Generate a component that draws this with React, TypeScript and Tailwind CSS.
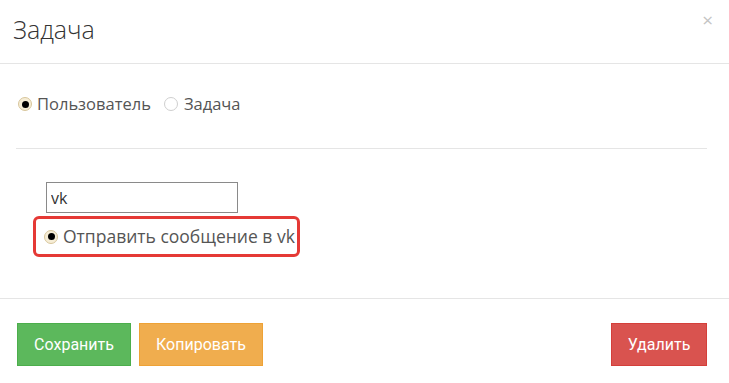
import * as React from "react";

function Radio({ checked }: { checked?: boolean }) {
  if (checked) {
    return (
      <span className="inline-flex h-[14px] w-[14px] shrink-0 items-center justify-center rounded-full border border-[#d8c69c] bg-[#f6edd6]">
        <span className="h-[7px] w-[7px] rounded-full bg-black" />
      </span>
    );
  }
  return <span className="inline-block h-[14px] w-[14px] shrink-0 rounded-full border border-[#cfcfcf] bg-white" />;
}

export default function App() {
  return (
    <div className="h-[383px] w-[729px] bg-white font-['Open_Sans',sans-serif] text-[#555]">
      <div className="relative flex h-[64px] items-center border-b border-[#e5e5e5] px-[13px] pb-[4px]">
        <h4 className="text-[25px] font-light text-[#333]">Задача</h4>
        <span className="absolute right-[16px] top-[11px] text-[19px] leading-none text-[#c4c4c4]">×</span>
      </div>

      <div className="pl-[16px] pr-[22px]">
        <div className="flex h-[85px] items-center border-b border-[#e5e5e5] pb-[4px] text-[16.5px]">
          <label className="ml-[2px] flex items-center gap-[5px]">
            <Radio checked />
            <span>Пользователь</span>
          </label>
          <label className="ml-[13px] flex items-center gap-[6px]">
            <Radio />
            <span>Задача</span>
          </label>
        </div>

        <div className="flex h-[149px] flex-col pl-[17px] pt-[33px]">
          <input
            readOnly
            value="vk"
            className="ml-[13px] h-[31px] w-[192px] border border-[#8a8a8a] px-[4px] text-[16px] text-[#333] outline-none"
          />
          <div className="mt-[3px] flex h-[41px] w-[267px] items-center gap-[5px] rounded-[6px] border-[3px] border-[#e53935] pl-[8px] text-[17.5px]">
            <Radio checked />
            <span>Отправить сообщение в vk</span>
          </div>
        </div>
      </div>

      <div className="flex items-start justify-between border-t border-[#e5e5e5] px-[17px] pt-[24px] font-['Roboto',sans-serif]">
        <div className="flex gap-[8px]">
          <button className="h-[43px] w-[114px] border border-[#4cae4c] bg-[#5cb85c] text-[16px] text-white">
            Сохранить
          </button>
          <button className="h-[43px] w-[124px] border border-[#eea236] bg-[#f0ad4e] text-[16px] text-white">
            Копировать
          </button>
        </div>
        <button className="mr-[5px] h-[43px] w-[96px] border border-[#d43f3a] bg-[#d9534f] text-[16px] text-white">
          Удалить
        </button>
      </div>
    </div>
  );
}
